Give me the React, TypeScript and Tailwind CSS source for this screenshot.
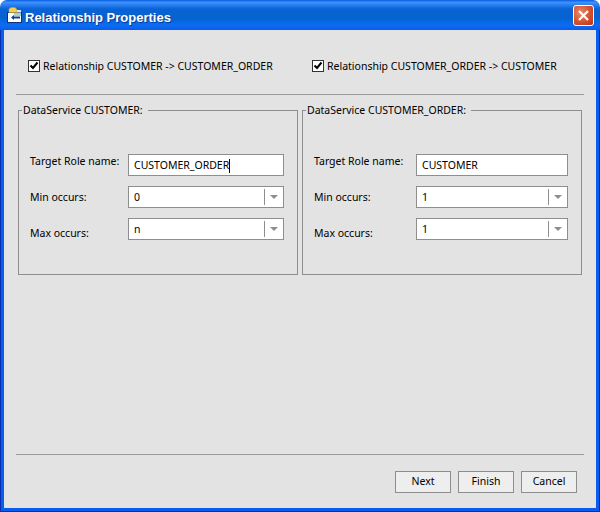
import type { ReactNode } from "react"

const font = "font-['Noto_Sans','Open_Sans',sans-serif]"

function AppIcon() {
  return (
    <svg width="17" height="17" viewBox="0 0 17 17" className="mt-[1px] shrink-0">
      <rect x="1.5" y="5.5" width="14" height="10" fill="#ffffff" stroke="#12306e" />
      <rect x="8" y="6" width="7" height="3" fill="#9fd6c4" />
      <path d="M3 5.5V2l2-1.5h4l2 2v3z" fill="#f4cf5a" stroke="#c9982a" strokeWidth="0.6" />
      <path d="M11 3h4v2.5h-4z" fill="#d8e6f6" />
      <path d="M14 9.5H8V8l-3 2.5L8 13v-1.5h6z" fill="#14408f" />
    </svg>
  )
}

function CloseButton() {
  return (
    <div className="flex h-[21px] w-[21px] items-center justify-center rounded-[3px] border border-white bg-[radial-gradient(circle_at_35%_35%,#e98a6c,#d4512f_55%,#b93313)]">
      <svg width="13" height="13" viewBox="0 0 13 13">
        <path d="M2 2l9 9M11 2l-9 9" stroke="#ffffff" strokeWidth="2.2" />
      </svg>
    </div>
  )
}

function Check({ label }: { label: string }) {
  return (
    <div className="flex items-center gap-[3px]">
      <div className="flex h-[12px] w-[12px] items-center justify-center border border-[#333333] bg-white">
        <svg width="10" height="10" viewBox="0 0 10 10">
          <path d="M1.5 4.5l2.5 2.5L8.5 1.5" fill="none" stroke="#000000" strokeWidth="2" />
        </svg>
      </div>
      <span className="text-[10.5px] leading-[14px] whitespace-nowrap text-black">{label}</span>
    </div>
  )
}

function Field({ width, children }: { width: string; children: ReactNode }) {
  return (
    <div className={`${width} flex h-[22px] items-center border border-[#8e8e8e] bg-white pt-[1px] pl-[5px] text-[10.5px] text-black`}>
      {children}
    </div>
  )
}

function Combo({ width, value }: { width: string; value: string }) {
  return (
    <Field width={width}>
      <span className="flex-1">{value}</span>
      <div className="-mt-[1px] flex h-[16px] w-[19px] items-center justify-center border-l border-[#8e8e8e]">
        <div className="h-0 w-0 border-x-[4px] border-t-[4px] border-x-transparent border-t-[#8e8e8e]" />
      </div>
    </Field>
  )
}

function ServicePanel({
  title,
  labelWidth,
  fieldWidth,
  role,
  min,
  max,
  focused,
}: {
  title: string
  labelWidth: string
  fieldWidth: string
  role: string
  min: string
  max: string
  focused?: boolean
}) {
  return (
    <fieldset className="h-[172px] w-[280px] border border-[#8e8e8e] pl-[11px]">
      <legend className="-ml-[8px] pr-[5px] pl-[1px] text-[10.5px] leading-[14px] whitespace-nowrap text-black">{title}</legend>
      <div className="mt-[37px] flex flex-col gap-[10px]">
        <div className="flex items-start">
          <span className={`${labelWidth} text-[10.5px] leading-[14px]`}>Target Role name:</span>
          <Field width={fieldWidth}>
            {role}
            {focused && <span className="h-[14px] w-px bg-black" />}
          </Field>
        </div>
        <div className="flex items-center">
          <span className={`${labelWidth} text-[10.5px] leading-[14px]`}>Min occurs:</span>
          <Combo width={fieldWidth} value={min} />
        </div>
        <div className="flex items-start">
          <span className={`${labelWidth} pt-[8px] text-[10.5px] leading-[14px]`}>Max occurs:</span>
          <Combo width={fieldWidth} value={max} />
        </div>
      </div>
    </fieldset>
  )
}

function WizardButton({ label }: { label: string }) {
  return (
    <button className="h-[22px] w-[56px] border border-[#8e8e8e] bg-[#eeeeee] text-[10.5px] text-black">
      {label}
    </button>
  )
}

export default function App() {
  return (
    <div className={`${font} flex h-[512px] w-[600px] flex-col bg-white`}>
      <div className="flex h-[30px] items-center rounded-t-[7px] bg-[linear-gradient(180deg,#0a5be0_0%,#3a93ff_8%,#2a80f0_16%,#0a62d6_30%,#0563cf_60%,#0a6cf5_85%,#0a5be8_100%)] pr-[6px] pl-[6px]">
        <AppIcon />
        <span className="ml-[2px] flex-1 pt-[5px] font-['Liberation_Sans',sans-serif] text-[13px] font-bold text-white [text-shadow:1px_1px_#0a3a9a]">
          Relationship Properties
        </span>
        <CloseButton />
      </div>
      <div className="flex flex-1 flex-col border-x border-b border-[#0831b0]">
        <div className="flex flex-1 flex-col border-x-[3px] border-b-[3px] border-[#0a5cf0] bg-[#e3e3e3]">
          <div className="flex pt-[29px] pl-[24px]">
            <div className="w-[284px]">
              <Check label="Relationship CUSTOMER -> CUSTOMER_ORDER" />
            </div>
            <Check label="Relationship CUSTOMER_ORDER -> CUSTOMER" />
          </div>
          <div className="mx-[12px] mt-[21px] h-px bg-[#9a9a9a]" />
          <div className="mt-[8px] flex gap-[4px] pl-[14px]">
            <ServicePanel
              title="DataService CUSTOMER:"
              labelWidth="w-[98px]"
              fieldWidth="w-[156px]"
              role="CUSTOMER_ORDER"
              min="0"
              max="n"
              focused
            />
            <ServicePanel
              title="DataService CUSTOMER_ORDER:"
              labelWidth="w-[102px]"
              fieldWidth="w-[152px]"
              role="CUSTOMER"
              min="1"
              max="1"
            />
          </div>
          <div className="mx-[12px] mt-auto h-px bg-[#9a9a9a]" />
          <div className="flex justify-end gap-[7px] pt-[16px] pr-[19px] pb-[15px]">
            <WizardButton label="Next" />
            <WizardButton label="Finish" />
            <WizardButton label="Cancel" />
          </div>
        </div>
      </div>
    </div>
  )
}
